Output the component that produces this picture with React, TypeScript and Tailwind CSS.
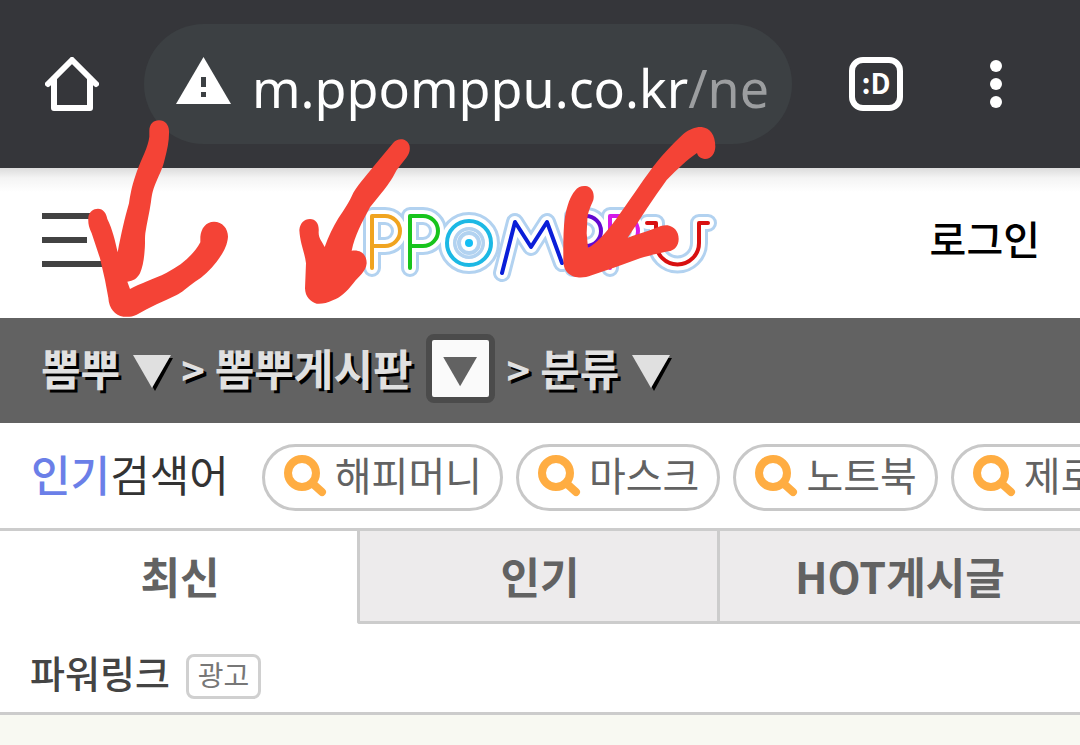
import { clsx } from "clsx";

const keywords = ["해피머니", "마스크", "노트북", "제로"];

const tabs = [
  { label: "최신", active: true },
  { label: "인기", active: false },
  { label: "HOT게시글", active: false },
];

// Letter strokes of the PPOMPPU wordmark
const letters = [
  { color: "#f0a420", d: "M12 62V10h13a15 15 0 0 1 0 30H12" },
  { color: "#18c41c", d: "M50 62V10h13a15 15 0 0 1 0 30H50" },
  { color: "#1cb8e4", d: "M87 37a22 22 0 1 0 44 0a22 22 0 1 0 -44 0" },
  { color: "#0a1ed8", d: "M142 67L155 16L171 41L187 16L202 57" },
  { color: "#6208d0", d: "M213 62V10h13a15 15 0 0 1 0 30H213" },
  { color: "#d41ae8", d: "M250 62V10h13a15 15 0 0 1 0 30H250" },
  { color: "#d81010", d: "M287 17h9v20a21.500 21.500 0 0 0 43 0V17h9" },
];

function Logo() {
  return (
    <svg viewBox="0 0 360 76" className="w-[360px] h-[76px]" fill="none" strokeLinejoin="round" strokeLinecap="round" aria-label="PPOMPPU">
      {letters.map(({ d }) => <path key={d} d={d} stroke="#b2d2f0" strokeWidth={18} />)}
      {letters.map(({ d }) => <path key={d} d={d} stroke="#fff" strokeWidth={12} />)}
      <circle cx={109} cy={37} r={14} stroke="#b2d2f0" strokeWidth={3} />
      <circle cx={109} cy={37} r={10} stroke="#b2d2f0" strokeWidth={4} />
      <circle cx={109} cy={37} r={4} fill="#14bef4" />
      {letters.map(({ d, color }) => <path key={d} d={d} stroke={color} strokeWidth={4} />)}
    </svg>
  );
}

function Triangle({ className, shadow }: { className: string; shadow?: boolean }) {
  return (
    <svg viewBox="0 0 40 36" className={className} aria-hidden="true">
      {shadow && <path d="M3 3H40L22 36Z" fill="#000" />}
      <path d="M0 0H38L19 33Z" fill="currentColor" />
    </svg>
  );
}

function SearchIcon() {
  return (
    <svg viewBox="0 0 45 42" className="w-[45px] h-[42px] mb-1 shrink-0" fill="none" stroke="#ffad42" aria-hidden="true">
      <circle cx="19" cy="18" r="14" strokeWidth="8" />
      <path d="M29 28L39 37" strokeWidth="8" strokeLinecap="round" />
    </svg>
  );
}

function BrowserBar() {
  return (
    <header className="flex items-center h-[168px] pl-[45px] pr-[72px] bg-[#35363a] text-white">
      <button type="button" aria-label="Home" className="shrink-0">
        <svg viewBox="0 0 54 54" className="w-[54px] h-[54px]" fill="none" stroke="currentColor" strokeWidth="6" strokeLinecap="round" strokeLinejoin="round">
          <path d="M3 27L27 3L51 27" />
          <path d="M9 22V51H45V22" />
        </svg>
      </button>
      <button type="button" className="flex flex-1 items-center h-[120px] ml-[45px] pl-8 rounded-full bg-[#3c4043] whitespace-nowrap overflow-hidden">
        <svg viewBox="0 0 55 47" className="w-[55px] h-[47px] mb-2 shrink-0" aria-hidden="true">
          <path d="M27.500 0L55 47H0Z" fill="#fff" />
          <path d="M25 20h5v10h-5zM25 35h5v5h-5z" fill="#3c4043" />
        </svg>
        <span className="ml-[21px] mt-2 text-[52px] leading-[72px] font-['Noto_Sans',sans-serif]">
          m.ppomppu.co.kr<span className="text-[#9c9ea0]">/ne</span>
        </span>
      </button>
      <button type="button" aria-label="Tabs" className="flex items-center justify-center w-[54px] h-[54px] ml-[57px] pb-1 shrink-0 border-[6px] border-white rounded-[14px] text-[28px] leading-none font-bold font-['Noto_Sans_CJK_KR',sans-serif]">
        :D
      </button>
      <button type="button" aria-label="Menu" className="flex flex-col items-center gap-[6px] w-6 ml-[81px] shrink-0">
        <span className="size-3 rounded-full bg-white" />
        <span className="size-3 rounded-full bg-white" />
        <span className="size-3 rounded-full bg-white" />
      </button>
    </header>
  );
}

function SiteHeader() {
  return (
    <div className="grid grid-cols-[1fr_auto_1fr] items-center h-[150px] px-10 pb-[6px] bg-[linear-gradient(#dcdcdc,#f4f4f4_10px,#fff_24px)]">
      <button type="button" aria-label="전체메뉴" className="flex flex-col gap-[18px] ml-[2px] justify-self-start">
        <span className="w-[60px] h-[6px] bg-[#424242]" />
        <span className="w-[45px] h-[6px] bg-[#424242]" />
        <span className="w-[60px] h-[6px] bg-[#424242]" />
      </button>
      <a href="#home" className="pt-2"><Logo /></a>
      <a href="#login" className="justify-self-end pb-1 text-[40px] leading-[60px] font-medium text-black">로그인</a>
    </div>
  );
}

function Breadcrumb() {
  return (
    <nav className="flex items-center h-[105px] pl-[41px] pb-1 bg-[#626262] text-[43px] leading-[60px] font-bold text-[#e0e0e0] whitespace-nowrap [text-shadow:3px_3px_0_#000]">
      <button type="button" className="flex items-center gap-[13px] pb-1 [text-shadow:inherit]">
        뽐뿌 <Triangle shadow className="w-10 h-9 mt-3" />
      </button>
      <span className="ml-2 mr-[10px] text-[40px]">&gt;</span>
      <a href="#board" className="pb-1">뽐뿌게시판</a>
      <button type="button" aria-label="게시판 선택" className="flex items-center justify-center w-[69px] h-[69px] ml-[13px] border-[6px] border-[#4b4b4b] rounded-lg bg-[#fafafa] text-[#626262]">
        <Triangle className="w-9 h-8 ml-[2px] mt-2" />
      </button>
      <span className="ml-3 mr-[10px] text-[40px]">&gt;</span>
      <button type="button" className="flex items-center gap-[13px] pb-1 [text-shadow:inherit]">
        분류 <Triangle shadow className="w-10 h-9 mt-3" />
      </button>
    </nav>
  );
}

// Hand-drawn marker arrows lying over the page
function MarkerArrows() {
  return (
    <svg viewBox="0 0 1080 745" className="absolute top-0 left-0 w-[1080px] h-[745px] pointer-events-none" fill="#f44336" aria-hidden="true">
      <path transform="translate(80 115) scale(.33333)" d="M208 48C208 28 220 16 237 16C255 16 267 30 267 48C268 75 262 103 255 130C248 160 240 175 231 195C220 220 216 235 213 260C208 295 200 325 196 355C194 375 196 385 194 405C192 435 188 455 180 475C172 490 160 499 142 500L150 522C180 505 220 493 260 473C305 450 340 420 361 382V365C363 340 378 320 402 320C427 320 444 340 444 365C442 395 425 420 410 440C390 465 370 485 345 500C320 518 305 533 290 540C250 560 210 575 170 599C155 606 145 606 130 605C105 600 87 582 85 548L75 495L60 430L35 355C26 335 24 325 25 307C27 290 40 281 54 281C70 282 78 293 82 312C98 345 105 375 113 412C124 355 134 310 147 265C153 225 158 205 171 168C185 130 205 95 208 65Z" />
      <path transform="translate(290 120) scale(.33333)" d="M310 68C322 53 350 53 358 75C362 90 357 102 350 112L320 150C305 180 290 200 275 218L240 262C215 310 195 345 185 392C215 388 230 405 230 430C228 455 205 470 190 490C170 515 150 535 130 540C110 550 95 552 80 551C60 545 46 530 45 505L48 430C45 400 30 370 28 330C30 310 42 297 60 297C78 297 88 312 86 335C85 355 97 365 104 381C115 350 130 320 145 295C165 265 178 245 190 218C210 185 235 160 250 140Z" />
      <path transform="translate(520 120) scale(.33333)" d="M545 21C570 24 586 45 586 80C585 100 575 116 555 117C542 116 533 108 531 99C500 120 475 145 440 180C400 235 365 290 323 353C350 343 380 335 405 325C420 318 430 315 443 316C463 320 476 335 476 357C476 378 463 392 445 394C420 400 390 405 360 415L290 440L215 466C200 472 185 474 172 472C145 468 131 450 130 425C130 380 129 330 135 290C142 255 150 230 165 212C175 198 190 196 202 199C218 205 224 222 220 240C212 260 203 275 202 300L200 340L204 384C230 370 250 345 275 315C310 270 345 215 385 160C420 110 460 70 490 42C510 26 528 20 545 21Z" />
    </svg>
  );
}

export default function App() {
  return (
    <div className="relative flex flex-col min-h-screen overflow-hidden bg-white font-['Noto_Sans_CJK_KR',sans-serif]">
      <BrowserBar />
      <SiteHeader />
      <Breadcrumb />

      {/* Popular searches */}
      <section className="flex items-center h-[105px] pl-[31px] pt-1 whitespace-nowrap">
        <h2 className="shrink-0 pb-[10px] text-[43px] leading-[60px] text-[#333]">
          <span className="font-medium text-[#6b7fe8]">인기</span>검색어
        </h2>
        <div className="flex gap-[13px] ml-[33px]">
          {keywords.map((word) => (
            <a key={word} href="#search" className="flex items-center shrink-0 h-[67px] px-[18px] border-[3px] border-[#c8c8c8] rounded-full text-[40px] leading-[60px] text-[#626262]">
              <SearchIcon />
              <span className="ml-[7px] pb-2">{word}</span>
            </a>
          ))}
        </div>
      </section>

      {/* Board tabs */}
      <div role="tablist" className="grid grid-cols-3 h-24 border-t-[3px] border-[#ccc]">
        {tabs.map(({ label, active }) => (
          <button
            key={label} type="button" role="tab" aria-selected={active}
            className={clsx(
              "text-[43px] leading-[60px] font-bold text-[#626262] whitespace-nowrap",
              active
                ? "pb-[5px]"
                : "-ml-[3px] pb-[2px] border-l-[3px] border-b-[3px] border-[#ccc] rounded-bl-[3px] bg-[#edebec]"
            )}
          >
            {label}
          </button>
        ))}
      </div>

      {/* Power link */}
      <div className="flex items-center h-[91px] pl-[30px] pt-3 border-b-[3px] border-[#ccc]">
        <h3 className="pb-1 text-[38px] leading-[60px] font-medium text-[#444]">파워링크</h3>
        <span className="flex items-center h-[45px] ml-4 mt-1 px-[9px] pb-1 border-[3px] border-[#d0d0d0] rounded-lg text-[28px] leading-[36px] text-[#777]">광고</span>
      </div>
      <div className="flex-1 bg-[#f8f9f2]" />

      <MarkerArrows />
    </div>
  );
}
